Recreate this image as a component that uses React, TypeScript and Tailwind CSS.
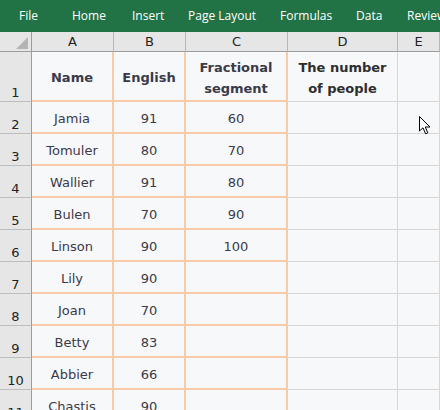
import React from "react";

const rows: [string, string, string][] = [
  ["Jamia", "91", "60"],
  ["Tomuler", "80", "70"],
  ["Wallier", "91", "80"],
  ["Bulen", "70", "90"],
  ["Linson", "90", "100"],
  ["Lily", "90", ""],
  ["Joan", "70", ""],
  ["Betty", "83", ""],
  ["Abbier", "66", ""],
  ["Chastis", "90", ""],
];

const menu = [
  { t: "File", w: "w-[53px]" },
  { t: "Home", w: "w-[60px]" },
  { t: "Insert", w: "w-[56px]" },
  { t: "Page Layout", w: "w-[92px]" },
  { t: "Formulas", w: "w-[76px]" },
  { t: "Data", w: "w-[51px]" },
  { t: "Review", w: "w-[60px]" },
];

const rowHdr =
  "flex items-end justify-center pb-0 leading-[16px] bg-[#e6e6e6] border-r border-r-[#9c9c9c] border-b border-b-[#bdbdbd] text-[13px] text-[#222]";
const orangeCell =
  "flex items-center justify-center pt-[3px] border-r-2 border-b-2 border-[#f8caa8] text-[13px] text-[#3a3a48]";
const grayCell = "border-r border-b border-[#d6d6d6]";

export default function App() {
  return (
    <div
      className="relative w-[440px] h-[410px] overflow-hidden bg-[#f7f8fa]"
      style={{ fontFamily: '"DejaVu Sans", sans-serif' }}
    >
      <div
        className="flex h-[32px] items-center pl-[19px] bg-[#217346] text-white text-[12px] whitespace-nowrap"
        style={{ fontFamily: '"Open Sans", sans-serif' }}
      >
        {menu.map((m) => (
          <div key={m.t} className={`${m.w} shrink-0 text-left`}>
            {m.t}
          </div>
        ))}
      </div>
      <div className="grid grid-cols-[32px_82px_72px_102px_110px_42px] grid-rows-[20px_50px_repeat(10,32px)]">
        <div className="relative bg-[#e6e6e6] border-r border-r-[#9c9c9c] border-b border-b-[#9c9c9c]">
          <svg className="absolute left-[16px] top-[5px]" width="12" height="12" viewBox="0 0 12 12">
            <polygon points="12,0 12,12 0,12" fill="#b4b4b4" />
          </svg>
        </div>
        {["A", "B", "C", "D", "E"].map((c) => (
          <div
            key={c}
            className="flex items-center justify-center bg-[#e6e6e6] border-r border-r-[#b8b8b8] border-b border-b-[#9c9c9c] text-[13px] text-[#222]"
          >
            {c}
          </div>
        ))}
        <div className={rowHdr}>1</div>
        <div className={`${orangeCell} font-bold text-[#2e2e2e]`}>Name</div>
        <div className={`${orangeCell} font-bold text-[#2e2e2e]`}>English</div>
        <div className={`${orangeCell} font-bold text-[#2e2e2e] text-center leading-[21px]`}>
          Fractional
          <br />
          segment
        </div>
        <div className={`${grayCell} flex items-center justify-center pt-[3px] text-center font-bold text-[13px] leading-[21px] text-[#2e2e2e]`}>
          The number
          <br />
          of people
        </div>
        <div className={grayCell}></div>
        {rows.map((r, i) => (
          <React.Fragment key={i}>
            <div className={rowHdr}>{i + 2}</div>
            <div className={orangeCell}>{r[0]}</div>
            <div className={orangeCell}>{r[1]}</div>
            <div className={orangeCell}>{r[2]}</div>
            <div className={grayCell}></div>
            <div className={grayCell}></div>
          </React.Fragment>
        ))}
      </div>
      <svg
        className="absolute left-[419px] top-[116px]"
        width="13"
        height="19"
        viewBox="0 0 13 19"
      >
        <path
          d="M0.5 0.5 L0.5 15 L4 11.8 L6.6 17.8 L8.8 16.8 L6.3 11 L11 11 Z"
          fill="#ffffff"
          stroke="#000000"
          strokeWidth="1"
          strokeLinejoin="miter"
        />
      </svg>
    </div>
  );
}
